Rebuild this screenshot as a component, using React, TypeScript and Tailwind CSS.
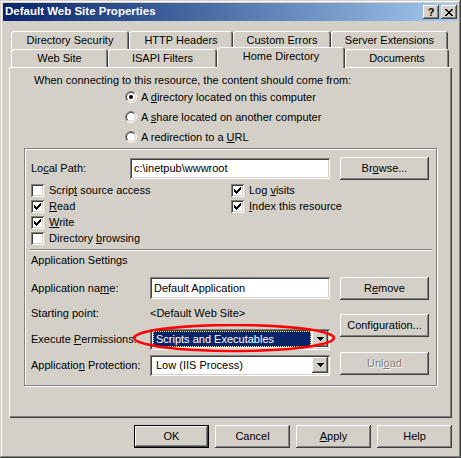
import React from 'react';

const RAISED =
  'shadow-[inset_-1px_-1px_#404040,inset_1px_1px_#ffffff,inset_-2px_-2px_#808080,inset_2px_2px_#d4d0c8]';
const SUNKEN =
  'shadow-[inset_1px_1px_#808080,inset_-1px_-1px_#ffffff,inset_2px_2px_#404040,inset_-2px_-2px_#d4d0c8]';

function Check() {
  // classic 7x7 pixel tick
  const px = [
    [6, 0], [5, 1], [6, 1], [0, 2], [4, 2], [5, 2], [6, 2],
    [0, 3], [1, 3], [3, 3], [4, 3], [5, 3], [0, 4], [1, 4], [2, 4], [3, 4], [4, 4],
    [1, 5], [2, 5], [3, 5], [2, 6],
  ];
  return (
    <svg width="7" height="7" viewBox="0 0 7 7" shapeRendering="crispEdges">
      {px.map(([x, y], i) => (
        <rect key={i} x={x} y={y} width="1" height="1" fill="#000" />
      ))}
    </svg>
  );
}

function Checkbox({ checked, children }: { checked?: boolean; children: React.ReactNode }) {
  return (
    <div className="flex h-[16px] items-center">
      <div className={`flex h-[13px] w-[13px] shrink-0 items-center justify-center bg-white ${SUNKEN}`}>
        {checked && <Check />}
      </div>
      <span className="ml-[5px] whitespace-nowrap">{children}</span>
    </div>
  );
}

function Radio({ checked, children }: { checked?: boolean; children: React.ReactNode }) {
  return (
    <div className="flex h-[20px] items-center">
      <svg width="12" height="12" viewBox="0 0 12 12" className="shrink-0">
        <circle cx="6" cy="6" r="4.5" fill="#fff" />
        <path d="M2.1 9.9 A5.5 5.5 0 0 1 9.9 2.1" stroke="#808080" fill="none" />
        <path d="M2.8 9.2 A4.5 4.5 0 0 1 9.2 2.8" stroke="#404040" fill="none" />
        <path d="M9.9 2.1 A5.5 5.5 0 0 1 2.1 9.9" stroke="#ffffff" fill="none" />
        <path d="M9.2 2.8 A4.5 4.5 0 0 1 2.8 9.2" stroke="#d4d0c8" fill="none" />
        {checked && <circle cx="6" cy="6" r="2" fill="#000" />}
      </svg>
      <span className="ml-[4px] whitespace-nowrap">{children}</span>
    </div>
  );
}

function Btn({
  children,
  w = 89,
  disabled,
  isDefault,
}: {
  children: React.ReactNode;
  w?: number;
  disabled?: boolean;
  isDefault?: boolean;
}) {
  const width = w === 75 ? 'w-[75px]' : 'w-[89px]';
  if (isDefault) {
    return (
      <div className={`h-[23px] ${width} border border-black`}>
        <div
          className={`flex h-full w-full items-center justify-center bg-[#d4d0c8] shadow-[inset_-1px_-1px_#404040,inset_1px_1px_#ffffff,inset_-2px_-2px_#808080]`}
        >
          {children}
        </div>
      </div>
    );
  }
  return (
    <div
      className={`flex h-[23px] ${width} items-center justify-center bg-[#d4d0c8] ${RAISED} ${
        disabled ? 'text-[#808080] [text-shadow:1px_1px_#ffffff]' : ''
      }`}
    >
      {children}
    </div>
  );
}

function DropArrow() {
  return (
    <div className={`flex h-[16px] w-[16px] shrink-0 items-center justify-center bg-[#d4d0c8] ${RAISED}`}>
      <svg width="7" height="4" viewBox="0 0 7 4" shapeRendering="crispEdges">
        <path d="M0 0h7v1H0zM1 1h5v1H1zM2 2h3v1H2zM3 3h1v1H3z" fill="#000" />
      </svg>
    </div>
  );
}

function Tab({ label, w, selected }: { label: string; w: string; selected?: boolean }) {
  if (selected) {
    return (
      <div
        className={`relative z-10 -mt-[2px] -mb-[1px] flex h-[21px] ${w} items-start justify-center rounded-t-[3px] bg-[#d4d0c8] pt-[4px] shadow-[inset_1px_1px_#ffffff,inset_-1px_0_#404040,inset_-2px_0_#808080]`}
      >
        {label}
      </div>
    );
  }
  return (
    <div
      className={`flex h-[18px] ${w} items-center justify-center rounded-t-[3px] bg-[#d4d0c8] pt-[1px] shadow-[inset_1px_1px_#ffffff,inset_-1px_0_#404040,inset_-2px_0_#808080]`}
    >
      {label}
    </div>
  );
}

export default function App() {
  return (
    <div
      className={`h-[458px] w-[461px] bg-[#d4d0c8] p-[3px] font-['Liberation_Sans',Arial,sans-serif] text-[11px] leading-none text-black shadow-[inset_-1px_-1px_#404040,inset_1px_1px_#d4d0c8,inset_-2px_-2px_#808080,inset_2px_2px_#ffffff]`}
    >
      {/* title bar */}
      <div className="flex h-[18px] items-center bg-gradient-to-r from-[#0a246a] to-[#a6caf0] pl-[2px] pr-[1px]">
        <span className="flex-1 text-[11.5px] font-bold text-white">Default Web Site Properties</span>
        <div className={`flex h-[14px] w-[16px] items-center justify-center bg-[#d4d0c8] text-[11px] font-bold ${RAISED}`}>
          ?
        </div>
        <div className={`ml-[2px] flex h-[14px] w-[16px] items-center justify-center bg-[#d4d0c8] ${RAISED}`}>
          <svg width="8" height="7" viewBox="0 0 8 7" shapeRendering="crispEdges">
            <path
              d="M0 0h2v1H0zM6 0h2v1H6zM1 1h2v1H1zM5 1h2v1H5zM2 2h4v1H2zM3 3h2v1H3zM2 4h4v1H2zM1 5h2v1H1zM5 5h2v1H5zM0 6h2v1H0zM6 6h2v1H6z"
              fill="#000"
            />
          </svg>
        </div>
      </div>

      <div className="ml-[6px] mt-[10px] w-[443px]">
        {/* tabs */}
        <div className="flex pl-[2px]">
          <Tab label="Directory Security" w="w-[118px]" />
          <Tab label="HTTP Headers" w="w-[104px]" />
          <Tab label="Custom Errors" w="w-[98px]" />
          <Tab label="Server Extensions" w="w-[117px]" />
        </div>
        <div className="flex pl-[2px]">
          <Tab label="Web Site" w="w-[97px]" />
          <Tab label="ISAPI Filters" w="w-[109px]" />
          <Tab label="Home Directory" w="w-[128px]" selected />
          <Tab label="Documents" w="w-[104px]" />
        </div>

        {/* panel */}
        <div className="h-[351px] pt-[6px] shadow-[inset_1px_1px_#ffffff,inset_-1px_-1px_#404040,inset_-2px_-2px_#808080]">
          <div className="ml-[25px] flex h-[14px] items-center">
            When connecting to this resource, the content should come from:
          </div>
          <div className="ml-[116px]">
            <Radio checked>
              A <u>d</u>irectory located on this computer
            </Radio>
            <Radio>
              A <u>s</u>hare located on another computer
            </Radio>
            <Radio>
              A redirection to a <u>U</u>RL
            </Radio>
          </div>

          {/* group box */}
          <div className="ml-[15px] mt-[1px] h-[238px] w-[413px] border border-[#808080] pl-[6px] pt-[8px] shadow-[inset_1px_1px_#ffffff,1px_1px_#ffffff]">
            <div className="flex h-[23px] items-center">
              <span className="w-[99px]">
                Lo<u>c</u>al Path:
              </span>
              <div className={`flex h-[21px] w-[200px] items-center bg-white pl-[4px] ${SUNKEN}`}>
                c:\inetpub\wwwroot
              </div>
              <div className="ml-[10px]">
                <Btn>
                  Br<u>o</u>wse...
                </Btn>
              </div>
            </div>

            <div className="mt-[2px] grid grid-cols-[200px_auto]">
              <Checkbox>
                Scrip<u>t</u> source access
              </Checkbox>
              <Checkbox checked>
                Log <u>v</u>isits
              </Checkbox>
              <Checkbox checked>
                <u>R</u>ead
              </Checkbox>
              <Checkbox checked>
                <u>I</u>ndex this resource
              </Checkbox>
              <Checkbox checked>
                <u>W</u>rite
              </Checkbox>
              <div />
              <Checkbox>
                Directory <u>b</u>rowsing
              </Checkbox>
            </div>

            <div className="-ml-[1px] mt-[3px] h-[2px] w-[402px] border-t border-[#808080] border-b border-b-white" />

            <div className="mt-[1px] flex h-[16px] items-center">Application Settings</div>

            <div className="mt-[8px] flex">
              <div className="relative w-[299px]">
                <div className="flex h-[24px] items-center">
                  <span className="w-[119px]">
                    Application na<u>m</u>e:
                  </span>
                  <div className={`flex h-[22px] w-[180px] items-center bg-white pl-[4px] ${SUNKEN}`}>
                    Default Application
                  </div>
                </div>
                <div className="flex h-[26px] items-center">
                  <span className="w-[119px]">Starting point:</span>
                  <span>&lt;Default Web Site&gt;</span>
                </div>
                <div className="relative flex h-[26px] items-center">
                  <span className="w-[119px]">
                    Execute <u>P</u>ermissions:
                  </span>
                  <div className={`flex h-[21px] w-[180px] items-center bg-white p-[2px] ${SUNKEN}`}>
                    <div className="ml-[1px] mr-[1px] flex h-[16px] flex-1 items-center border border-dotted border-[#e8e4a8] bg-[#0a246a] pl-[2px] text-white">
                      Scripts and Executables
                    </div>
                    <DropArrow />
                  </div>
                  <svg
                    className="pointer-events-none absolute left-[101px] top-[-2px]"
                    width="205"
                    height="30"
                    viewBox="0 0 205 30"
                  >
                    <ellipse cx="102" cy="14" rx="100" ry="13" fill="none" stroke="#ff0000" strokeWidth="2.5" />
                  </svg>
                </div>
                <div className="flex h-[26px] items-center">
                  <span className="w-[119px]">
                    Applicatio<u>n</u> Protection:
                  </span>
                  <div className={`flex h-[21px] w-[180px] items-center bg-white p-[2px] ${SUNKEN}`}>
                    <div className="flex-1 pl-[4px]">Low (IIS Process)</div>
                    <DropArrow />
                  </div>
                </div>
              </div>
              <div className="ml-[10px] flex flex-col">
                <div className="mt-[1px]">
                  <Btn>
                    R<u>e</u>move
                  </Btn>
                </div>
                <div className="mt-[14px]">
                  <Btn>Configuration...</Btn>
                </div>
                <div className="mt-[15px]">
                  <Btn disabled>
                    Unl<u>o</u>ad
                  </Btn>
                </div>
              </div>
            </div>
          </div>
        </div>

        {/* dialog buttons */}
        <div className="mt-[7px] flex justify-end gap-[6px]">
          <Btn w={75} isDefault>
            OK
          </Btn>
          <Btn w={75}>Cancel</Btn>
          <Btn w={75}>
            <u>A</u>pply
          </Btn>
          <Btn w={75}>Help</Btn>
        </div>
      </div>
    </div>
  );
}
